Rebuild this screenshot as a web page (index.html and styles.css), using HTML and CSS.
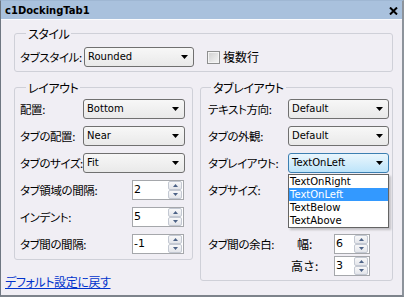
FILE: index.html
```html
<!DOCTYPE html>
<html lang="ja">
<head>
<meta charset="utf-8">
<link rel="stylesheet" href="styles.css">
</head>
<body>
<div class="window">
  <div class="titlebar">
    <span class="title">c1DockingTab1</span>
    <span class="close"><svg width="9" height="8" viewBox="0 0 9 8"><path d="M1 0.5 L8 7.5 M8 0.5 L1 7.5" stroke="#000" stroke-width="2"/></svg></span>
  </div>
  <div class="content">
    <fieldset class="group g-style">
      <legend>スタイル</legend>
      <div class="row">
        <span class="lbl lbl-style">タブスタイル:</span>
        <div class="combo c-style"><span>Rounded</span><svg class="arrow" width="7" height="4" viewBox="0 0 7 4"><path d="M0 0H7L3.5 4Z" fill="#000"/></svg></div>
        <span class="check"><span class="box"></span><span class="clabel">複数行</span></span>
      </div>
    </fieldset>
    <div class="cols">
      <div class="leftcol">
        <fieldset class="group g-layout">
          <legend>レイアウト</legend>
          <div class="rows">
            <div class="row between">
              <span class="lbl">配置:</span>
              <div class="combo c-left"><span>Bottom</span><svg class="arrow" width="7" height="4" viewBox="0 0 7 4"><path d="M0 0H7L3.5 4Z" fill="#000"/></svg></div>
            </div>
            <div class="row between">
              <span class="lbl">タブの配置:</span>
              <div class="combo c-left"><span>Near</span><svg class="arrow" width="7" height="4" viewBox="0 0 7 4"><path d="M0 0H7L3.5 4Z" fill="#000"/></svg></div>
            </div>
            <div class="row between">
              <span class="lbl">タブのサイズ:</span>
              <div class="combo c-left"><span>Fit</span><svg class="arrow" width="7" height="4" viewBox="0 0 7 4"><path d="M0 0H7L3.5 4Z" fill="#000"/></svg></div>
            </div>
            <div class="row between">
              <span class="lbl">タブ領域の間隔:</span>
              <div class="spin s-left"><span class="val">2</span><span class="btns"><span class="sb"><svg width="5" height="3" viewBox="0 0 5 3"><path d="M0 3H5L2.5 0Z" fill="#4c6286"/></svg></span><span class="sb"><svg width="5" height="3" viewBox="0 0 5 3"><path d="M0 0H5L2.5 3Z" fill="#4c6286"/></svg></span></span></div>
            </div>
            <div class="row between">
              <span class="lbl">インデント:</span>
              <div class="spin s-left"><span class="val">5</span><span class="btns"><span class="sb"><svg width="5" height="3" viewBox="0 0 5 3"><path d="M0 3H5L2.5 0Z" fill="#4c6286"/></svg></span><span class="sb"><svg width="5" height="3" viewBox="0 0 5 3"><path d="M0 0H5L2.5 3Z" fill="#4c6286"/></svg></span></span></div>
            </div>
            <div class="row between">
              <span class="lbl">タブ間の間隔:</span>
              <div class="spin s-left"><span class="val">-1</span><span class="btns"><span class="sb"><svg width="5" height="3" viewBox="0 0 5 3"><path d="M0 3H5L2.5 0Z" fill="#4c6286"/></svg></span><span class="sb"><svg width="5" height="3" viewBox="0 0 5 3"><path d="M0 0H5L2.5 3Z" fill="#4c6286"/></svg></span></span></div>
            </div>
          </div>
        </fieldset>
        <a class="reset" href="#">デフォルト設定に戻す</a>
      </div>
      <fieldset class="group g-tab">
        <legend>タブレイアウト</legend>
        <div class="rows">
          <div class="row between">
            <span class="lbl">テキスト方向:</span>
            <div class="combo c-right"><span>Default</span><svg class="arrow" width="7" height="4" viewBox="0 0 7 4"><path d="M0 0H7L3.5 4Z" fill="#000"/></svg></div>
          </div>
          <div class="row between">
            <span class="lbl">タブの外観:</span>
            <div class="combo c-right"><span>Default</span><svg class="arrow" width="7" height="4" viewBox="0 0 7 4"><path d="M0 0H7L3.5 4Z" fill="#000"/></svg></div>
          </div>
          <div class="row between">
            <span class="lbl">タブレイアウト:</span>
            <div class="combo c-right focus"><span>TextOnLeft</span><svg class="arrow" width="7" height="4" viewBox="0 0 7 4"><path d="M0 0H7L3.5 4Z" fill="#000"/></svg>
              <ul class="dropdown">
                <li>TextOnRight</li>
                <li class="sel">TextOnLeft</li>
                <li>TextBelow</li>
                <li>TextAbove</li>
              </ul>
            </div>
          </div>
          <div class="row">
            <span class="lbl">タブサイズ:</span>
          </div>
          <div class="row"></div>
          <div class="pair">
            <div class="row grid3">
              <span class="lbl">タブ間の余白:</span>
              <span class="sub sub-w">幅:</span>
              <div class="spin s-right"><span class="val">6</span><span class="btns"><span class="sb"><svg width="5" height="3" viewBox="0 0 5 3"><path d="M0 3H5L2.5 0Z" fill="#4c6286"/></svg></span><span class="sb"><svg width="5" height="3" viewBox="0 0 5 3"><path d="M0 0H5L2.5 3Z" fill="#4c6286"/></svg></span></span></div>
            </div>
            <div class="row grid3">
              <span class="lbl"></span>
              <span class="sub sub-h">高さ:</span>
              <div class="spin s-right"><span class="val">3</span><span class="btns"><span class="sb"><svg width="5" height="3" viewBox="0 0 5 3"><path d="M0 3H5L2.5 0Z" fill="#4c6286"/></svg></span><span class="sb"><svg width="5" height="3" viewBox="0 0 5 3"><path d="M0 0H5L2.5 3Z" fill="#4c6286"/></svg></span></span></div>
            </div>
          </div>
        </div>
      </fieldset>
    </div>
  </div>
</div>
</body>
</html>
```
FILE: styles.css
```css
* { box-sizing: border-box; }
html, body { margin: 0; padding: 0; }
body {
  width: 404px;
  height: 297px;
  overflow: hidden;
  background: #f0eef4;
  font-family: "Noto Sans CJK JP", sans-serif;
  color: #000;
}
.window {
  width: 404px;
  height: 297px;
  border: 1px solid #6f7782;
  border-top-color: #9fb7d3;
  border-right: 2px solid #8d939b;
  border-bottom: 2px solid #7d838b;
  background: #f0eef4;
  display: flex;
  flex-direction: column;
}
.titlebar {
  height: 18px;
  flex: none;
  background: #a9c1dd;
  display: flex;
  align-items: flex-start;
  justify-content: space-between;
  padding: 0 4px 0 4px;
}
.title {
  font: bold 10px/16px "DejaVu Sans", sans-serif;
  margin-top: 2px;
}
.close { display: flex; margin-top: 6px; }
.content {
  flex: 1;
  border-top: 1px solid #fbfbfd;
  display: flex;
  flex-direction: column;
}
.group {
  margin: 0;
  padding: 0;
  border: 1px solid #cfd0d8;
  border-radius: 3px;
  min-width: 0;
}
.group legend {
  font-size: 12px;
  line-height: 15px;
  padding: 0 2px;
  margin-left: 6px;
  letter-spacing: -0.4px;
  font-feature-settings: "palt";
}
.g-style {
  margin: 6px 0 0 13px;
  width: 379px;
  padding: 6px 0 4px 5px;
}
.row {
  display: flex;
  align-items: center;
  height: 20px;
}
.between { justify-content: space-between; }
.lbl {
  font-size: 11.5px;
  line-height: 14px;
  white-space: nowrap;
  letter-spacing: -0.4px;
  font-feature-settings: "palt";
}
.lbl-style { width: 64px; flex: none; }
.combo {
  position: relative;
  height: 20px;
  flex: none;
  border: 1px solid #707070;
  border-radius: 3px;
  background: linear-gradient(#f7f7f7, #e9e9e9);
  display: flex;
  align-items: center;
  justify-content: space-between;
  padding: 0 5px 0 3px;
  font: 10px/12px "DejaVu Sans", sans-serif;
}
.combo .arrow { flex: none; }
.c-style { width: 110px; }
.c-left { width: 102px; }
.c-right { width: 101px; }
.combo.focus {
  border-color: #3c7fb1;
  background: linear-gradient(#eaf6fd, #d3edfb 50%, #bde4fa);
}
.dropdown {
  position: absolute;
  top: 20px;
  left: -1px;
  width: 101px;
  margin: 0;
  padding: 0;
  list-style: none;
  background: #fff;
  border: 1px solid #646464;
  box-shadow: 2px 2px 2px rgba(0, 0, 0, 0.2);
  z-index: 5;
}
.dropdown li {
  height: 13px;
  font: 10px/13px "DejaVu Sans", sans-serif;
  padding-left: 1px;
  color: #000;
}
.dropdown li.sel { background: #3399ff; color: #fff; }
.check {
  display: flex;
  align-items: center;
  margin-left: 13px;
}
.check .box {
  width: 13px;
  height: 13px;
  border: 1px solid #8e8f8f;
  background: linear-gradient(135deg, #cfcfcf, #f6f6f6);
  box-shadow: inset 0 0 0 1px #f4f4f4;
}
.clabel {
  font-size: 12px;
  line-height: 14px;
  margin-left: 3px;
}
.cols {
  display: flex;
  margin-top: 8px;
  align-items: flex-start;
}
.leftcol {
  width: 192px;
  flex: none;
  display: flex;
  flex-direction: column;
}
.g-layout {
  margin: 0 0 0 13px;
  width: 179px;
  padding: 4px 7px 5px 5px;
}
.g-tab {
  margin: 0 0 0 7px;
  width: 193px;
  padding: 4px 3px 4px 7px;
}
.g-tab legend { margin-left: 3px; }
.rows {
  display: flex;
  flex-direction: column;
  gap: 7px;
}
.pair {
  display: flex;
  flex-direction: column;
  gap: 2px;
}
.grid3 {
  display: grid;
  grid-template-columns: 80px 46px 36px;
  align-items: center;
}
.sub {
  font-size: 12px;
  line-height: 14px;
}
.sub-w { padding-left: 9px; }
.sub-h { padding-left: 3px; }
.spin {
  height: 20px;
  flex: none;
  background: #fff;
  border: 1px solid #a5a7ab;
  display: flex;
  align-items: stretch;
  justify-content: space-between;
}
.s-left { width: 52px; margin-right: 1px; }
.s-right { width: 36px; }
.spin .val {
  font: 11px/18px "DejaVu Sans", sans-serif;
  padding-left: 1px;
}
.btns {
  display: flex;
  flex-direction: column;
  width: 14px;
  margin-right: 1px;
}
.sb {
  height: 9px;
  border: 1px solid #c3c8d2;
  border-radius: 2px;
  background: linear-gradient(#f8f8f9, #e3e5ea);
  display: flex;
  align-items: center;
  justify-content: center;
}
.reset {
  margin: 15px 0 0 4px;
  font-size: 12px;
  line-height: 14px;
  color: #0033cc;
  text-decoration: underline;
  letter-spacing: -0.4px;
  font-feature-settings: "palt";
  align-self: flex-start;
}
```
